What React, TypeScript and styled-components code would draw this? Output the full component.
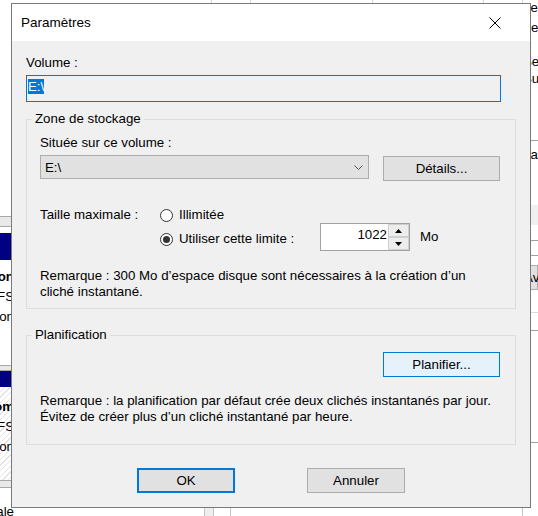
import React from 'react';
import styled, { createGlobalStyle, css } from 'styled-components';

const GlobalStyle = createGlobalStyle`
  html, body {
    margin: 0;
    padding: 0;
  }
  body {
    width: 538px;
    height: 516px;
    overflow: hidden;
    background: #ffffff;
    color: #000000;
    font-family: "Liberation Sans", Arial, sans-serif;
    font-size: 13.3px;
  }
  #root {
    position: relative;
    width: 538px;
    height: 516px;
  }
`;

/* ---------- the window behind the dialog ---------- */

const Backdrop = styled.div`
  display: flex;
  width: 538px;
  height: 516px;
  background: #ffffff;
`;

const SidePane = styled.div<{ $width: number }>`
  flex: none;
  width: ${(p) => p.$width}px;
  display: flex;
  flex-direction: column;
  overflow: hidden;
`;

const MainPane = styled.div`
  flex: 1;
  min-width: 0;
  display: flex;
  flex-direction: column;
  justify-content: space-between;
  overflow: hidden;
`;

const SplitterBand = styled.div<{ $top: number; $height: number }>`
  margin-top: ${(p) => p.$top}px;
  height: ${(p) => p.$height}px;
  flex: none;
  box-sizing: border-box;
  background: #e9e9e9;
  border-top: 1px solid #a8a8a8;
  border-bottom: 1px solid #a8a8a8;
`;

const CaptionBand = styled.div<{ $top?: number; $height: number }>`
  margin-top: ${(p) => p.$top ?? 0}px;
  height: ${(p) => p.$height}px;
  flex: none;
  background: #000080;
`;

const TreeBlock = styled.div<{ $hatched?: boolean; $top: number; $height: number }>`
  height: ${(p) => p.$height}px;
  flex: none;
  box-sizing: border-box;
  padding-top: ${(p) => p.$top}px;
  ${(p) =>
    p.$hatched &&
    css`
      background: repeating-linear-gradient(
        135deg,
        #ffffff 0 3px,
        #e2e2e2 3px 4px
      );
    `}
`;

const TreeRow = styled.div<{ $bold?: boolean; $end?: number; $top?: number }>`
  height: 20px;
  flex: none;
  margin-top: ${(p) => p.$top ?? 0}px;
  display: flex;
  justify-content: flex-end;
  padding-right: ${(p) => p.$end ?? 0}px;
  line-height: 20px;
  white-space: nowrap;
  font-weight: ${(p) => (p.$bold ? 700 : 400)};
`;

const ColumnHeader = styled.div`
  display: flex;
  height: 15px;
  margin-top: -12px;
  line-height: 15px;
  white-space: nowrap;
`;

const HeaderCell = styled.div<{ $width?: number; $indent?: number }>`
  flex: ${(p) => (p.$width ? 'none' : '1')};
  width: ${(p) => (p.$width ? `${p.$width}px` : 'auto')};
  min-width: 0;
  box-sizing: border-box;
  border-right: 1px solid #d6d6d6;
  padding-left: ${(p) => p.$indent ?? 38}px;
  overflow: hidden;
`;

const StatusRow = styled.div`
  display: flex;
  height: 8px;
  flex: none;
`;

const StatusCell = styled.div<{ $width?: number; $shaded?: boolean }>`
  flex: ${(p) => (p.$width ? 'none' : '1')};
  width: ${(p) => (p.$width ? `${p.$width}px` : 'auto')};
  box-sizing: border-box;
  border-right: 1px solid #c4c4c4;
  background: ${(p) => (p.$shaded ? '#eeeeee' : '#ffffff')};
`;

const RightItem = styled.div<{ $top: number }>`
  margin-top: ${(p) => p.$top}px;
  height: 16px;
  flex: none;
  line-height: 16px;
  white-space: nowrap;
`;

const RightRule = styled.div<{ $top: number; $light?: boolean }>`
  margin-top: ${(p) => p.$top}px;
  height: 1px;
  flex: none;
  background: ${(p) => (p.$light ? '#dadada' : '#a0a0a0')};
`;

const RightShade = styled.div<{ $top: number; $height: number }>`
  margin-top: ${(p) => p.$top}px;
  height: ${(p) => p.$height}px;
  flex: none;
  background: #f0f0f0;
`;

const RightButton = styled.div<{ $top: number }>`
  margin-top: ${(p) => p.$top}px;
  height: 25px;
  flex: none;
  box-sizing: border-box;
  line-height: 23px;
  background: #e1e1e1;
  border: 1px solid #adadad;
  white-space: nowrap;
`;

/* ---------- dialog ---------- */

const Dialog = styled.div`
  position: absolute;
  left: 11px;
  top: 3px;
  width: 518px;
  border: 1px solid #7a7a7a;
  background: #f0f0f0;
`;

const TitleBar = styled.div`
  height: 37px;
  display: flex;
  align-items: center;
  justify-content: space-between;
  padding: 0 29px 0 9px;
  background: #ffffff;
`;

const TitleText = styled.span`
  font-size: 13.5px;
`;

const CloseGlyph = styled.svg`
  display: block;
`;

const Body = styled.div`
  display: flex;
  flex-direction: column;
  padding: 14px;
`;

const Label = styled.div`
  line-height: 16px;
  white-space: nowrap;
`;

const VolumeField = styled.div`
  width: 475px;
  height: 27px;
  margin-top: 4px;
  box-sizing: border-box;
  padding: 3px 0 0 1px;
  border: 1px solid #0078d7;
  background: #f0f0f0;
`;

const Selection = styled.span`
  display: inline-block;
  line-height: 15px;
  background: #0078d7;
  color: #ffffff;
`;

const GroupBox = styled.fieldset<{ $top: number; $padTop: number; $padBottom: number }>`
  margin: ${(p) => p.$top}px 0 0;
  min-width: 0;
  min-inline-size: 0;
  padding: ${(p) => p.$padTop}px 15px ${(p) => p.$padBottom}px 13px;
  border: 1px solid #dcdcdc;
  display: flex;
  flex-direction: column;
`;

const GroupTitle = styled.legend`
  margin-left: -8px;
  padding: 0 3px;
  line-height: 16px;
`;

const SourceRow = styled.div`
  display: flex;
  justify-content: space-between;
  align-items: flex-start;
  margin-top: 4px;
`;

const ComboBox = styled.div`
  width: 329px;
  height: 24px;
  box-sizing: border-box;
  display: flex;
  align-items: center;
  justify-content: space-between;
  padding: 0 5px 0 4px;
  background: #e1e1e1;
  border: 1px solid #adadad;
`;

const PushButton = styled.button<{ $width: number; $state?: 'hover' | 'default' }>`
  width: ${(p) => p.$width}px;
  height: 25px;
  margin: 0;
  padding: 0;
  box-sizing: border-box;
  font: inherit;
  color: #000000;
  background: #e1e1e1;
  border: 1px solid #adadad;
  ${(p) =>
    p.$state === 'hover' &&
    css`
      background: #e5f1fb;
      border-color: #0078d7;
    `}
  ${(p) =>
    p.$state === 'default' &&
    css`
      border: 2px solid #0078d7;
    `}
`;

const DetailsButton = styled(PushButton)`
  margin-top: 1px;
`;

const SizeGrid = styled.div`
  display: grid;
  grid-template-columns: 120px 160px 90px auto;
  grid-template-rows: 16px 28px;
  margin-top: 26px;
`;

const RadioOption = styled.div<{ $row: number; $nudge?: number }>`
  grid-column: 2;
  grid-row: ${(p) => p.$row};
  align-self: center;
  margin-top: ${(p) => p.$nudge ?? 0}px;
  display: flex;
  align-items: center;
  gap: 6px;
  line-height: 16px;
  white-space: nowrap;
`;

const RadioCircle = styled.span<{ $checked?: boolean }>`
  width: 13px;
  height: 13px;
  flex: none;
  box-sizing: border-box;
  border-radius: 50%;
  border: 1px solid #333333;
  background: #ffffff;
  display: flex;
  align-items: center;
  justify-content: center;
  &::after {
    content: '';
    display: ${(p) => (p.$checked ? 'block' : 'none')};
    width: 7px;
    height: 7px;
    border-radius: 50%;
    background: #333333;
  }
`;

const SizeLabel = styled(Label)`
  grid-column: 1;
  grid-row: 1;
  align-self: center;
`;

const SpinBox = styled.div`
  grid-column: 3;
  grid-row: 2;
  display: flex;
  box-sizing: border-box;
  border: 1px solid #a2a2a2;
  background: #ffffff;
`;

const SpinValue = styled.div`
  flex: 1;
  padding: 3px 1px 0 0;
  line-height: 16px;
  text-align: right;
`;

const SpinArrows = styled.div`
  width: 21px;
  display: flex;
  flex-direction: column;
`;

const SpinArrow = styled.div`
  flex: 1;
  box-sizing: border-box;
  display: flex;
  align-items: center;
  justify-content: center;
  background: #ededed;
  border: 1px solid #cfcfcf;
`;

const UnitLabel = styled(Label)`
  grid-column: 4;
  grid-row: 2;
  align-self: center;
  margin-left: 10px;
`;

const Note = styled.div<{ $top: number }>`
  margin-top: ${(p) => p.$top}px;
  line-height: 16px;
`;

const ScheduleRow = styled.div`
  display: flex;
  justify-content: flex-end;
`;

const DialogButtons = styled.div`
  display: flex;
  justify-content: center;
  gap: 72px;
  margin-top: 23px;
`;

const Arrow = ({ down }: { down?: boolean }) => (
  <svg width="7" height="4" viewBox="0 0 7 4">
    <polygon points={down ? '0,0 7,0 3.5,4' : '0,4 7,4 3.5,0'} fill="#000000" />
  </svg>
);

export default function App() {
  return (
    <>
      <GlobalStyle />
      <Backdrop>
        <SidePane $width={14}>
          <SplitterBand $top={216} $height={11} />
          <CaptionBand $top={6} $height={27} />
          <TreeBlock $top={7} $height={105}>
            <TreeRow $bold>Description</TreeRow>
            <TreeRow>NTFS</TreeRow>
            <TreeRow>Fonction</TreeRow>
          </TreeBlock>
          <SplitterBand $top={0} $height={6} />
          <CaptionBand $height={16} />
          <TreeBlock $hatched $top={10} $height={93}>
            <TreeRow $bold>Nom</TreeRow>
            <TreeRow>NTFS</TreeRow>
            <TreeRow>Fonction</TreeRow>
          </TreeBlock>
          <SplitterBand $top={0} $height={8} />
          <TreeRow $end={-4} $top={14}>
            Totale
          </TreeRow>
        </SidePane>
        <MainPane>
          <ColumnHeader>
            <HeaderCell $width={198} />
            <HeaderCell $width={10} />
            <HeaderCell $width={122}>Général</HeaderCell>
            <HeaderCell $width={111}>Outils</HeaderCell>
            <HeaderCell $indent={12}>Matériel</HeaderCell>
          </ColumnHeader>
          <StatusRow>
            <StatusCell $width={191} />
            <StatusCell $width={9} $shaded />
            <StatusCell $width={17} />
            <StatusCell />
          </StatusRow>
        </MainPane>
        <SidePane $width={15}>
          <RightItem $top={0}>Le</RightItem>
          <RightItem $top={4}>Fermer</RightItem>
          <RightItem $top={18}>Serveur</RightItem>
          <RightItem $top={1}>Sur</RightItem>
          <RightRule $top={53} />
          <RightItem $top={6}>La</RightItem>
          <RightShade $top={42} $height={20} />
          <RightRule $top={15} />
          <RightRule $top={14} />
          <RightButton $top={9}>Avertir</RightButton>
          <RightRule $top={22} $light />
          <RightRule $top={17} />
          <RightRule $top={111} />
        </SidePane>
      </Backdrop>

      <Dialog>
        <TitleBar>
          <TitleText>Paramètres</TitleText>
          <CloseGlyph width="12" height="12" viewBox="0 0 12 12">
            <path d="M0.5 0.5 L11.5 11.5 M11.5 0.5 L0.5 11.5" stroke="#000000" strokeWidth="1" />
          </CloseGlyph>
        </TitleBar>
        <Body>
          <Label>Volume :</Label>
          <VolumeField>
            <Selection>E:\</Selection>
          </VolumeField>

          <GroupBox $top={9} $padTop={8} $padBottom={8}>
            <GroupTitle>Zone de stockage</GroupTitle>
            <Label>Située sur ce volume :</Label>
            <SourceRow>
              <ComboBox>
                <span>E:\</span>
                <svg width="9" height="5" viewBox="0 0 9 5">
                  <polyline points="0.5,0.5 4.5,4.5 8.5,0.5" fill="none" stroke="#555555" strokeWidth="1" />
                </svg>
              </ComboBox>
              <DetailsButton $width={117}>Détails...</DetailsButton>
            </SourceRow>
            <SizeGrid>
              <SizeLabel>Taille maximale :</SizeLabel>
              <RadioOption $row={1}>
                <RadioCircle />
                Illimitée
              </RadioOption>
              <RadioOption $row={2} $nudge={4}>
                <RadioCircle $checked />
                Utiliser cette limite :
              </RadioOption>
              <SpinBox>
                <SpinValue>1022</SpinValue>
                <SpinArrows>
                  <SpinArrow>
                    <Arrow />
                  </SpinArrow>
                  <SpinArrow>
                    <Arrow down />
                  </SpinArrow>
                </SpinArrows>
              </SpinBox>
              <UnitLabel>Mo</UnitLabel>
            </SizeGrid>
            <Note $top={17}>
              Remarque : 300 Mo d’espace disque sont nécessaires à la création d’un
              <br />
              cliché instantané.
            </Note>
          </GroupBox>

          <GroupBox $top={18} $padTop={9} $padBottom={19}>
            <GroupTitle>Planification</GroupTitle>
            <ScheduleRow>
              <PushButton $width={117} $state="hover">
                Planifier...
              </PushButton>
            </ScheduleRow>
            <Note $top={16}>
              Remarque : la planification par défaut crée deux clichés instantanés par jour.
              <br />
              Évitez de créer plus d’un cliché instantané par heure.
            </Note>
          </GroupBox>

          <DialogButtons>
            <PushButton $width={98} $state="default">
              OK
            </PushButton>
            <PushButton $width={98}>Annuler</PushButton>
          </DialogButtons>
        </Body>
      </Dialog>
    </>
  );
}
